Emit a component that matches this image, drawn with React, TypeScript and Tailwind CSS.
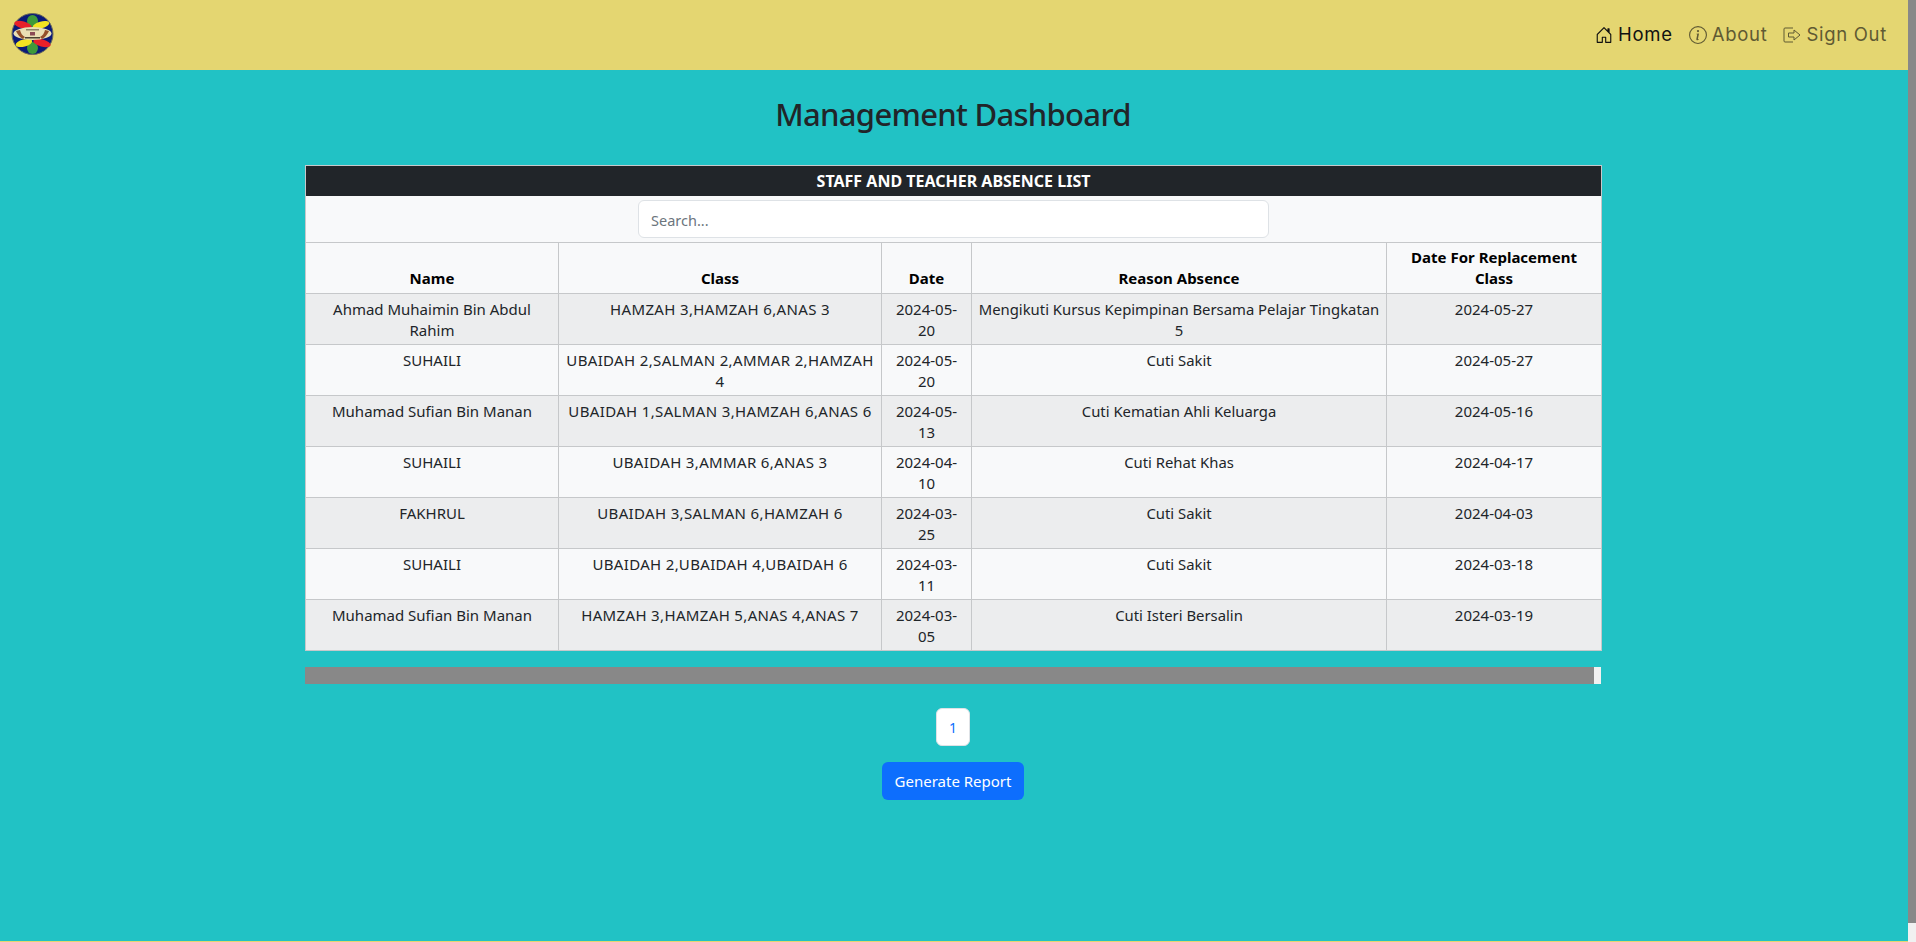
import { BsHouseDoor, BsInfoCircle } from 'react-icons/bs'

const ROWS = [
  ['Ahmad Muhaimin Bin Abdul Rahim', 'HAMZAH 3,HAMZAH 6,ANAS 3', '2024-05-20', 'Mengikuti Kursus Kepimpinan Bersama Pelajar Tingkatan 5', '2024-05-27'],
  ['SUHAILI', 'UBAIDAH 2,SALMAN 2,AMMAR 2,HAMZAH 4', '2024-05-20', 'Cuti Sakit', '2024-05-27'],
  ['Muhamad Sufian Bin Manan', 'UBAIDAH 1,SALMAN 3,HAMZAH 6,ANAS 6', '2024-05-13', 'Cuti Kematian Ahli Keluarga', '2024-05-16'],
  ['SUHAILI', 'UBAIDAH 3,AMMAR 6,ANAS 3', '2024-04-10', 'Cuti Rehat Khas', '2024-04-17'],
  ['FAKHRUL', 'UBAIDAH 3,SALMAN 6,HAMZAH 6', '2024-03-25', 'Cuti Sakit', '2024-04-03'],
  ['SUHAILI', 'UBAIDAH 2,UBAIDAH 4,UBAIDAH 6', '2024-03-11', 'Cuti Sakit', '2024-03-18'],
  ['Muhamad Sufian Bin Manan', 'HAMZAH 3,HAMZAH 5,ANAS 4,ANAS 7', '2024-03-05', 'Cuti Isteri Bersalin', '2024-03-19'],
]

const HEADERS = ['Name', 'Class', 'Date', 'Reason Absence', 'Date For Replacement Class']

// class column is all caps and runs a little wider, reason column needs the extra room
const CELL_CLASSES = ['px-[6px]', 'px-[6px] tracking-[0.35px]', 'px-[6px]', 'px-1 text-[14.85px]', 'px-[6px]']

function Logo() {
  return (
    <svg width="44" height="44" viewBox="0 0 44 44">
      <circle cx="21.5" cy="21" r="20.5" fill="#0a1a78" stroke="#6b6a5c" strokeWidth="1" />
      <ellipse cx="21.5" cy="8" rx="5.5" ry="6" fill="#3f9a3a" />
      <ellipse cx="21.5" cy="35" rx="5.5" ry="6" fill="#3f9a3a" />
      <ellipse cx="12" cy="12" rx="9" ry="3.6" fill="#e8202a" transform="rotate(15 12 12)" />
      <ellipse cx="30" cy="12" rx="8.5" ry="3.4" fill="#f2e322" transform="rotate(-15 30 12)" />
      <ellipse cx="13" cy="30" rx="8.5" ry="3.6" fill="#f2e322" transform="rotate(-15 13 30)" />
      <ellipse cx="31" cy="30" rx="9" ry="3.6" fill="#e8202a" transform="rotate(15 31 30)" />
      <ellipse cx="21.5" cy="20.5" rx="19" ry="6.5" fill="#e9dfb4" />
      <path d="M5 18 Q7 23 12 26 L14 24 Q10 22 9 17 Z" fill="#93502a" />
      <path d="M38 18 Q36 23 31 26 L29 24 Q33 22 34 17 Z" fill="#93502a" />
      <rect x="15" y="16" width="13" height="1.5" fill="#8d8468" />
      <rect x="19" y="19" width="5" height="3.5" fill="#8a4a55" />
      <rect x="14" y="24" width="15" height="1.5" fill="#4a4030" />
    </svg>
  )
}

function SignOutIcon() {
  return (
    <svg width="18" height="16" viewBox="0 0 18 16" fill="none" stroke="currentColor" strokeWidth="1">
      <path d="M10 1H2a1 1 0 0 0-1 1v12a1 1 0 0 0 1 1h8" />
      <path d="M5.5 6h5.5V3l6 5-6 5v-3H5.5z" strokeLinejoin="round" />
    </svg>
  )
}

function NavLink({ icon, label, active }: { icon: React.ReactNode; label: string; active?: boolean }) {
  return (
    <a className={`flex items-center gap-[5px] ${active ? 'text-[#111]' : 'text-[#5f5a33]'}`}>
      {icon}
      <span>{label}</span>
    </a>
  )
}

export default function App() {
  return (
    <div className="flex h-[942px] overflow-hidden font-['Noto_Sans',sans-serif]">
      <div className="flex flex-1 flex-col border-b border-b-[#e4d671] bg-[#21c2c5]">
        <nav className="flex h-[70px] items-center justify-between bg-[#e4d671] pl-[11px] pr-[21px]">
          <Logo />
          <div className="flex items-center gap-[16px] font-['Inter',sans-serif] text-[18.5px] tracking-[0.7px]">
            <NavLink active icon={<BsHouseDoor size={18} />} label="Home" />
            <NavLink icon={<BsInfoCircle size={18} />} label="About" />
            <NavLink icon={<SignOutIcon />} label="Sign Out" />
          </div>
        </nav>

        <div className="flex flex-col pr-[2px]">
          <h1 className="mt-[23px] text-center text-[31px] font-[550] leading-[42px] tracking-[-0.7px] text-[#212529]">Management Dashboard</h1>

          <div className="mx-auto mt-[30px] w-[1296px]">
            <table className="w-full table-fixed border-collapse border border-[#c6c8ca] text-center text-[15px] leading-[21px] text-[#212529]">
              <colgroup>
                <col className="w-[253px]" />
                <col className="w-[323px]" />
                <col className="w-[90px]" />
                <col className="w-[415px]" />
                <col className="w-[215px]" />
              </colgroup>
              <thead>
                <tr>
                  <th colSpan={5} className="h-[30px] bg-[#212529] pt-[2px] text-[16px] font-bold text-white">STAFF AND TEACHER ABSENCE LIST</th>
                </tr>
                <tr>
                  <th colSpan={5} className="h-[47px] border-b border-[#c6c8ca] bg-[#f8f9fa] font-normal">
                    <div className="flex justify-center">
                      <input
                        placeholder="Search..."
                        className="h-[38px] w-[631px] rounded-md border border-[#dee2e6] bg-white px-3 pt-[2px] text-[14.5px] placeholder:text-[#6c757d]"
                      />
                    </div>
                  </th>
                </tr>
                <tr>
                  {HEADERS.map((h) => (
                    <th key={h} className="border border-[#c6c8ca] bg-[#f8f9fa] px-[6px] py-1 align-bottom font-bold text-black">
                      {h}
                    </th>
                  ))}
                </tr>
              </thead>
              <tbody>
                {ROWS.map((row, i) => (
                  <tr key={i} className={i % 2 === 0 ? 'bg-[#ecedee]' : 'bg-[#f8f9fa]'}>
                    {row.map((cell, j) => (
                      <td key={j} className={`h-[51px] border border-[#c6c8ca] pb-[3px] pt-[5px] align-top ${CELL_CLASSES[j]}`}>{cell}</td>
                    ))}
                  </tr>
                ))}
              </tbody>
            </table>

            <div className="mt-[16px] flex h-[17px] bg-[#f1f1f1]">
              <div className="w-[1289px] bg-[#888888]" />
            </div>
          </div>

          <div className="mt-[24px] flex justify-center">
            <span className="flex h-[38px] w-[34px] items-center justify-center rounded-md border border-[#dee2e6] bg-white text-[14px] text-[#0d6efd]">1</span>
          </div>
          <div className="mt-[16px] flex justify-center">
            <button className="h-[38px] w-[142px] rounded-md bg-[#0d6efd] text-[15px] text-white">Generate Report</button>
          </div>
        </div>
      </div>

      <div className="flex w-2 flex-col bg-[#f1f1f1]">
        <div className="h-[923px] bg-[#888888]" />
      </div>
    </div>
  )
}
